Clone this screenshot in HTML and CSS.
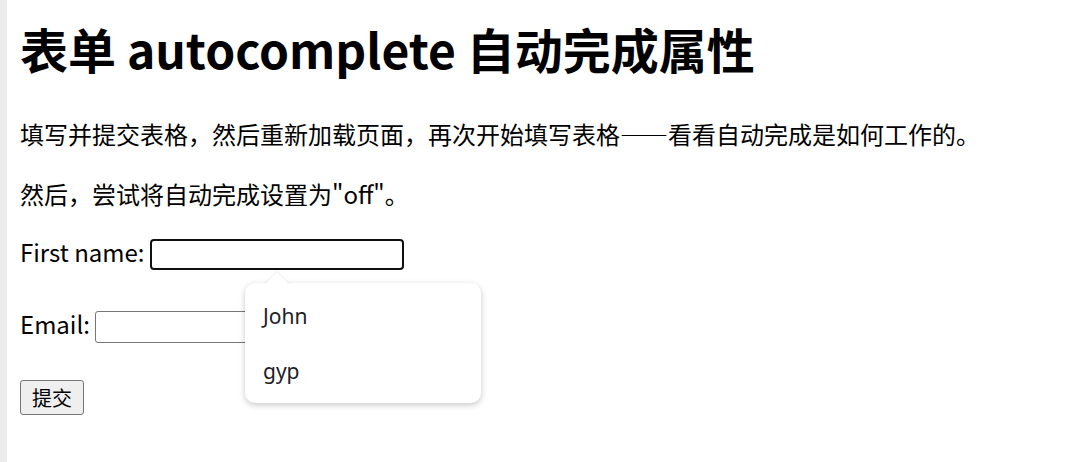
FILE: index.html
```html
<!DOCTYPE html>
<html lang="zh-CN">
<head>
  <meta charset="UTF-8" />
  <title>表单 autocomplete 自动完成属性</title>
  <link rel="stylesheet" href="styles.css">
</head>
<body>
  <div class="frame">
    <h1>表单 autocomplete 自动完成属性</h1>
    <p>填写并提交表格，然后重新加载页面，再次开始填写表格——看看自动完成是如何工作的。</p>
    <p>然后，尝试将自动完成设置为"off"。</p>

    <form class="demo" autocomplete="on">
      <div class="row">
        <label>First name:</label>
        <input type="text" name="fname" class="field focused">
      </div>
      <div class="row">
        <label>Email:</label>
        <input type="email" name="email" class="field">
      </div>
      <div class="row">
        <input type="submit" value="提交" class="submit">
      </div>

      <!-- browser suggestion list for the focused field -->
      <div class="suggest">
        <div class="suggest-item">John</div>
        <div class="suggest-item">gyp</div>
      </div>
    </form>
  </div>
</body>
</html>
```

FILE: styles.css
```css
body {
  margin: 0;
  background: #fff;
  color: #000;
  font-family: "Noto Sans CJK SC", "Noto Sans", sans-serif;
  font-size: 24px;
  line-height: 1.5;
}

.frame {
  border-left: 7px solid #ececec;
  padding: 12px 13px;
  min-height: 438px;
}

h1 {
  font-size: 48px;
  line-height: 72px;
  margin: 0 0 32px;
}

p {
  margin: 24px 0;
}

.demo {
  position: relative;
}

.row {
  display: flex;
  align-items: center;
  gap: 5px;
  height: 36px;
  margin-bottom: 36px;
}

.row label {
  margin-bottom: 5px;
}

.field {
  box-sizing: border-box;
  width: 254px;
  height: 32px;
  border: 1px solid #767676;
  border-radius: 3px;
  padding: 1px 3px;
  font-size: 20px;
  margin-top: 2px;
}

.field.focused {
  height: 31px;
  margin-top: 1px;
  border: 2px solid #101010;
  border-radius: 4px;
  outline: none;
}

.submit {
  box-sizing: border-box;
  height: 35px;
  width: 64px;
  padding: 0;
  margin-top: -1px;
  font-family: "Noto Sans CJK SC", sans-serif;
  font-size: 20px;
  background: #efefef;
  border: 1px solid #767676;
  border-radius: 3px;
  color: #000;
}

.suggest {
  position: absolute;
  left: 225px;
  top: 47px;
  width: 236px;
  padding: 6px 0 4px;
  background: #fff;
  border-radius: 10px;
  box-shadow: 0 2px 6px rgba(0, 0, 0, 0.22);
  font-family: "Noto Sans", sans-serif;
  font-size: 21px;
  color: #202124;
}

.suggest::before {
  content: "";
  position: absolute;
  left: 23px;
  top: -7px;
  width: 18px;
  height: 18px;
  background: #fff;
  transform: rotate(45deg);
  box-shadow: -1px -1px 2px rgba(0, 0, 0, 0.06);
}

.suggest-item {
  position: relative;
  padding: 0 18px;
  line-height: 55px;
}
```
